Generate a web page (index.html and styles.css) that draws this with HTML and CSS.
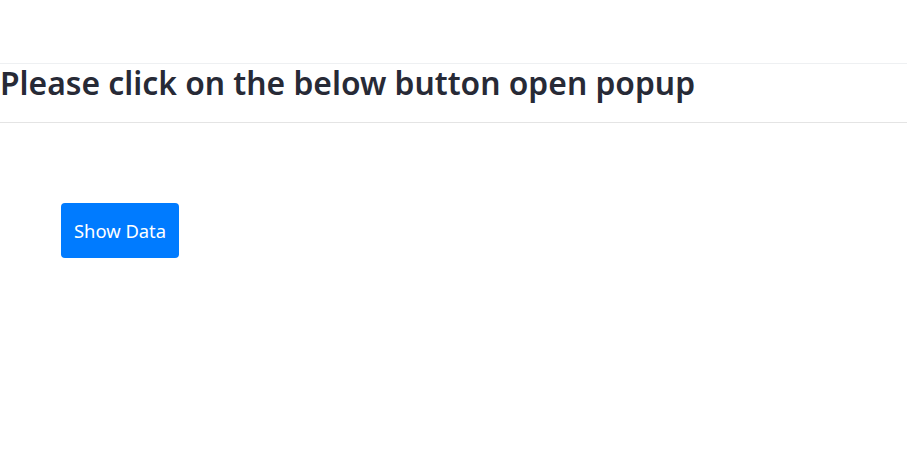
FILE: index.html
```html
<!DOCTYPE html>
<html>
<head>
<meta charset="utf-8">
<link rel="stylesheet" href="styles.css">
</head>
<body>
<div class="header">
  <h2 class="title">Please click on the below button open popup</h2>
</div>
<div class="content">
  <button class="btn">Show Data</button>
</div>
</body>
</html>
```
FILE: styles.css
```css
html, body {
  margin: 0;
  padding: 0;
  background: #fff;
}
body {
  font-family: "Noto Sans", "Open Sans", sans-serif;
  color: #212529;
}
.header {
  margin-top: 63px;
  border-top: 1px solid #eef0f2;
  border-bottom: 1px solid #e4e4e4;
  height: 58px;
  box-sizing: content-box;
}
.title {
  margin: 0;
  font-size: 31.8px;
  font-weight: 600;
  color: #272a36;
  line-height: 1.2;
}
.content {
  padding: 80px 0 0 61px;
}
.btn {
  width: 118px;
  height: 55px;
  background: #007bff;
  border: none;
  border-radius: 4px;
  color: #fff;
  font-family: "Noto Sans", "Open Sans", sans-serif;
  font-size: 18.4px;
  padding: 0 0 1px 0;
}
```
